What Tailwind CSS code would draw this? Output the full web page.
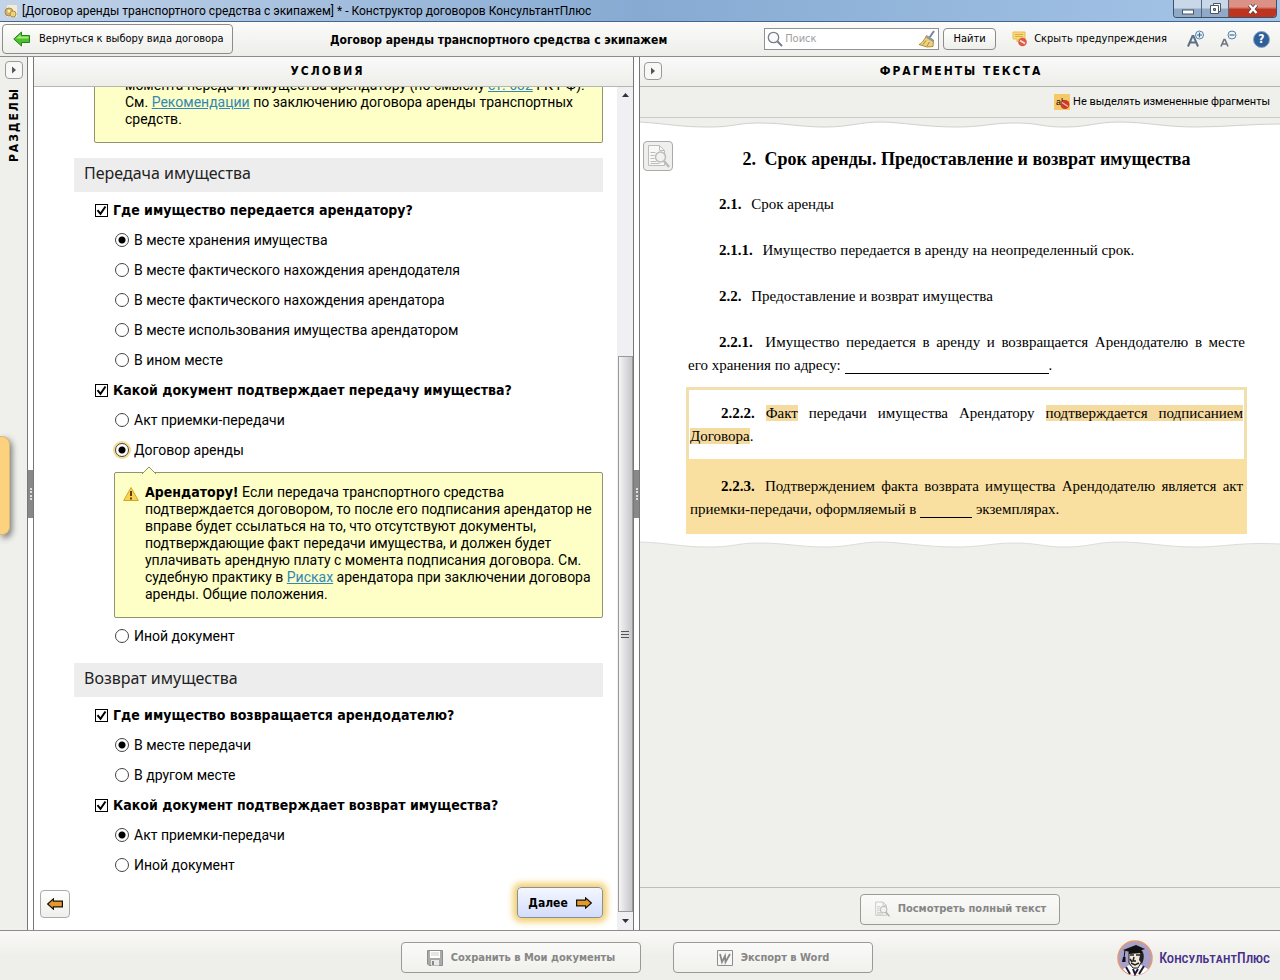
<!DOCTYPE html>
<html lang="ru">
<head>
<meta charset="utf-8">
<title>Конструктор договоров КонсультантПлюс</title>
<script src="https://cdn.jsdelivr.net/npm/@tailwindcss/browser@4"></script>
</head>
<body class="relative flex h-screen flex-col overflow-hidden bg-[#efefeb] font-[Roboto,'Noto_Sans',sans-serif] text-sm text-black">

<!-- Shared symbols -->
<svg class="hidden" aria-hidden="true">
  <symbol id="tick" viewBox="0 0 13 13"><path d="M2.5 6.2l3 3.6 5-7.3" fill="none" stroke="#000" stroke-width="2"/></symbol>
  <symbol id="arrow" viewBox="0 0 16 12"><path d="M.6 3.2h9V.9L15.3 6l-5.700 5.100V8.800h-9z" fill="#e39a2d" stroke="#1c1000" stroke-width="1.200"/></symbol>
  <symbol id="preview" viewBox="0 0 24 24">
    <path d="M2.500 1.500h11l5 5v15h-16z" fill="#f8f8f6" stroke="currentColor"/>
    <path d="M13.500 1.500v5h5M4.500 8.500h5M4.500 11.500h4M4.500 14.500h4M4.500 17.500h6M4.500 19.500h9" fill="none" stroke="currentColor"/>
    <circle cx="14.500" cy="13" r="5" fill="#f1f1ef" stroke="currentColor" stroke-width="1.500"/>
    <path d="M18 17l5 6" stroke="currentColor" stroke-width="2.500"/>
  </symbol>
</svg>

<!-- Title bar -->
<header class="flex h-[22px] shrink-0 items-center border-b border-[#47658c] bg-linear-to-r from-[#c3d4e9] via-[#86aad2] to-[#a6c6e8] pl-1 text-xs">
  <svg class="mr-1 size-[14px]" viewBox="0 0 14 14"><path d="M3 1h10v12H3z" fill="#f4ecd0"/><circle cx="5" cy="8" r="4" fill="#d9b45c" stroke="#a4855a"/><circle cx="9" cy="10" r="3" fill="#eed27a" stroke="#b08e3d"/><circle cx="5" cy="7" r="1.500" fill="#f7eec9"/></svg>
  <h1 class="mr-auto">[Договор аренды транспортного средства с экипажем] * - Конструктор договоров КонсультантПлюс</h1>
  <div class="mr-[3px] flex h-[18px] self-start overflow-hidden rounded-b border border-t-0 border-[#3f4f66]">
    <button type="button" aria-label="Свернуть" class="grid w-7 place-items-center border-r border-[#53647c] bg-linear-to-b from-[#c9d8e8] from-45% to-[#8fa9c6] to-55%"><svg class="size-[14px]" viewBox="0 0 14 14"><rect x="1.500" y="8" width="11" height="4" fill="#fff" stroke="#4b5564"/></svg></button>
    <button type="button" aria-label="Восстановить" class="grid w-[27px] place-items-center border-r border-[#53647c] bg-linear-to-b from-[#c9d8e8] from-45% to-[#8fa9c6] to-55%"><svg class="size-[13px]" viewBox="0 0 13 13"><path d="M4.500 1.500h7v8h-7z" fill="#fff" stroke="#4b5564"/><path d="M1.500 3.500h8v8h-8z" fill="#fff" stroke="#4b5564"/><path d="M4.500 6.500h2v2h-2z" fill="#8fa9c6" stroke="#4b5564"/></svg></button>
    <button type="button" aria-label="Закрыть" class="grid w-[47px] place-items-center bg-linear-to-b from-[#dc9186] from-40% to-[#bd3520] to-55%"><svg class="size-[12px]" viewBox="0 0 12 12"><path d="M2.500 2l7 8M9.500 2l-7 8" stroke="#5b3a3a" stroke-width="4"/><path d="M2.500 2l7 8M9.500 2l-7 8" stroke="#fff" stroke-width="2.500"/></svg></button>
  </div>
</header>

<!-- Toolbar -->
<div class="flex h-[35px] shrink-0 items-center border-b border-[#8c8c8c] bg-linear-to-b from-[#fbfbf9] to-[#ededea] pr-2.5 font-['DejaVu_Sans_Condensed','Noto_Sans',sans-serif] text-[11px]">
  <button type="button" class="ml-0.5 flex h-[30px] w-[231px] items-center gap-2 rounded border border-[#8c8c8c] bg-linear-to-b from-[#fdfdfc] to-[#eeeeeb] pl-2.5">
    <svg class="h-4 w-[18px]" viewBox="0 0 18 16"><path d="M.800 8L8.500 1v3.500H16.500v7H8.500V15z" fill="#4fc02b" stroke="#23811a"/><path d="M3 7.500L7.500 3.500v2h8v2z" fill="#a4e87e"/></svg>
    Вернуться к выбору вида договора
  </button>
  <h2 class="flex-1 pt-0.5 text-center text-xs font-bold">Договор аренды транспортного средства с экипажем</h2>
  <div class="flex h-[22px] w-[175px] items-center border border-[#8f9296] bg-white px-0.5">
    <svg class="size-4" viewBox="0 0 16 16"><circle cx="6.500" cy="6.500" r="5.200" fill="#fafafa" stroke="#777d8c" stroke-width="1.300"/><path d="M10.500 10.500l4.500 4.500" stroke="#777d8c" stroke-width="2"/></svg>
    <input type="search" aria-label="Поиск" placeholder="Поиск" class="min-w-0 flex-1 bg-transparent pl-0.5 outline-none placeholder:text-[#a0a0a0]">
    <button type="button" aria-label="Очистить"><svg class="size-[18px]" viewBox="0 0 18 18"><path d="M16 1l-4.500 6.500" stroke="#6f85ab" stroke-width="2"/><path d="M8.500 5.500l7 4.500-.5 6.500-6 .500L1 14.500C4 13.500 6.500 9.500 8.500 5.500z" fill="#eed27b" stroke="#ad8b40"/><path d="M8.500 7l6.500 4" stroke="#7f97bb" stroke-width="1.500"/><path d="M5 14.500l3-4M9 16l2.500-4" stroke="#b08a3a"/></svg></button>
  </div>
  <button type="button" class="ml-1 h-[22px] w-[53px] rounded-sm border border-[#8c8c8c] bg-linear-to-b from-white to-[#eeeeeb]">Найти</button>
  <button type="button" class="ml-4 flex items-center gap-1.5">
    <svg class="size-4" viewBox="0 0 16 16"><path d="M1 1h12v7H7l-2 3V8H1z" fill="#f8d978" stroke="#e8bf59"/><path d="M3 3.500h8M3 5.500h8" stroke="#dfac49"/><circle cx="10.500" cy="11" r="4.300" fill="#dd5a45"/><path d="M8 9.500l5 3" stroke="#fbe3dd" stroke-width="1.600"/></svg>
    Скрыть предупреждения
  </button>
  <button type="button" aria-label="Увеличить шрифт" class="ml-5"><svg class="size-[18px]" viewBox="0 0 18 18"><path d="M1 16.500L5.500 6h1L11 16.500M3 12.500h6" fill="none" stroke="#5d6e86" stroke-width="2"/><circle cx="12.500" cy="5" r="4" fill="#eef4fa" stroke="#5680a8"/><path d="M10 5h5M12.500 2.500v5" stroke="#386d9c" stroke-width="1.200"/></svg></button>
  <button type="button" aria-label="Уменьшить шрифт" class="ml-3.5"><svg class="size-[18px]" viewBox="0 0 18 18"><path d="M2 16.500L5 9.500h1L9 16.500M3.500 14h4" fill="none" stroke="#6c7480" stroke-width="1.600"/><circle cx="13" cy="5" r="4" fill="#eef4fa" stroke="#5680a8"/><path d="M10.500 5h5" stroke="#386d9c" stroke-width="1.200"/></svg></button>
  <button type="button" aria-label="Справка" class="ml-4 grid size-[17px] place-items-center rounded-full border border-[#8fa5bf] bg-[#2f5f9b] text-xs leading-3 font-bold text-white">?</button>
</div>

<main class="flex min-h-0 flex-1 border-b border-[#8c8c8c]">
  <!-- Collapsed sections rail -->
  <aside class="flex w-7 shrink-0 flex-col items-center border-r border-[#777] pt-1">
    <button type="button" aria-label="Показать разделы" class="grid size-[18px] shrink-0 place-items-center rounded border border-[#999] bg-[#f8f8f6]"><svg class="h-2 w-1.5" viewBox="0 0 6 8"><path d="M1 .5L5 4 1 7.500z" fill="#555"/></svg></button>
    <h2 class="mt-2 rotate-180 font-['DejaVu_Sans_Condensed',sans-serif] text-xs font-bold tracking-[2px] [writing-mode:vertical-rl]">РАЗДЕЛЫ</h2>
  </aside>
  <div class="flex w-[5px] shrink-0 items-center bg-white"><div class="grid h-12 w-full place-items-center bg-[#888]"><span class="h-3 border-l-2 border-dotted border-[#ddd]"></span></div></div>

  <!-- Conditions -->
  <section class="flex w-[601px] shrink-0 flex-col border-x border-[#777] bg-white">
    <h2 class="flex h-[30px] shrink-0 items-center justify-center border-b border-[#b5b5b2] bg-linear-to-b from-[#fafaf8] to-[#ededea] pr-3 pb-0.5 font-['DejaVu_Sans_Condensed',sans-serif] text-xs font-bold tracking-[2px]">УСЛОВИЯ</h2>
    <div class="flex min-h-0 flex-1">
      <div class="flex min-w-0 flex-1 flex-col overflow-hidden pr-3.5 pl-10">
        <div class="-mt-[35px] ml-5 shrink-0 rounded-xs border border-[#93936d] bg-[#feffc6] pt-6 pr-2 pb-3.5 pl-[30px] leading-[17px]">
          <p>момента передачи имущества арендатору (по смыслу <a href="#" class="text-[#3187b5] underline">ст. 632</a> ГК РФ).<br>См. <a href="#" class="text-[#3187b5] underline">Рекомендации</a> по заключению договора аренды транспортных<br>средств.</p>
        </div>

        <h3 class="mt-[15px] flex h-[34px] shrink-0 items-center bg-[#ededed] px-2.5 pb-1 font-['Noto_Sans',sans-serif] text-base text-[#222]">Передача имущества</h3>
        <div class="mt-[3px] flex flex-col pl-[21px]">
          <label class="flex h-[30px] items-center gap-[5px] font-['DejaVu_Sans_Condensed',sans-serif] font-bold"><span class="grid"><input type="checkbox" checked class="col-start-1 row-start-1 size-[13px] appearance-none border border-black bg-white"><svg class="col-start-1 row-start-1 size-[13px]"><use href="#tick"/></svg></span>Где имущество передается арендатору?</label>
          <div class="flex flex-col pl-5">
            <label class="flex h-[30px] items-center gap-[5px]"><input type="radio" name="place" checked class="size-3.5 appearance-none rounded-full border border-[#444] bg-white checked:bg-[radial-gradient(circle,#000_3px,#fff_4px)]">В месте хранения имущества</label>
            <label class="flex h-[30px] items-center gap-[5px]"><input type="radio" name="place" class="size-3.5 appearance-none rounded-full border border-[#444] bg-white checked:bg-[radial-gradient(circle,#000_3px,#fff_4px)]">В месте фактического нахождения арендодателя</label>
            <label class="flex h-[30px] items-center gap-[5px]"><input type="radio" name="place" class="size-3.5 appearance-none rounded-full border border-[#444] bg-white checked:bg-[radial-gradient(circle,#000_3px,#fff_4px)]">В месте фактического нахождения арендатора</label>
            <label class="flex h-[30px] items-center gap-[5px]"><input type="radio" name="place" class="size-3.5 appearance-none rounded-full border border-[#444] bg-white checked:bg-[radial-gradient(circle,#000_3px,#fff_4px)]">В месте использования имущества арендатором</label>
            <label class="flex h-[30px] items-center gap-[5px]"><input type="radio" name="place" class="size-3.5 appearance-none rounded-full border border-[#444] bg-white checked:bg-[radial-gradient(circle,#000_3px,#fff_4px)]">В ином месте</label>
          </div>
          <label class="flex h-[30px] items-center gap-[5px] font-['DejaVu_Sans_Condensed',sans-serif] font-bold"><span class="grid"><input type="checkbox" checked class="col-start-1 row-start-1 size-[13px] appearance-none border border-black bg-white"><svg class="col-start-1 row-start-1 size-[13px]"><use href="#tick"/></svg></span>Какой документ подтверждает передачу имущества?</label>
          <div class="flex flex-col pl-5">
            <label class="flex h-[30px] items-center gap-[5px]"><input type="radio" name="doc" class="size-3.5 appearance-none rounded-full border border-[#444] bg-white checked:bg-[radial-gradient(circle,#000_3px,#fff_4px)]">Акт приемки-передачи</label>
            <label class="flex h-[30px] items-center gap-[5px]"><input type="radio" name="doc" checked class="size-3.5 appearance-none rounded-full border border-[#444] bg-white ring-2 ring-[#f3dc93] checked:bg-[radial-gradient(circle,#000_3px,#fff_4px)]">Договор аренды</label>
            <div class="relative my-[7px] mb-[3px] -ml-px flex rounded-xs border border-[#93936d] bg-[#feffc6] pt-[11px] pr-2 pb-3.5 pl-2 leading-[17px]">
              <svg class="absolute -top-[7px] left-[26px] h-[8px] w-4" viewBox="0 0 16 8"><path d="M1 8l7-7 7 7" fill="#feffc6" stroke="#93936d"/></svg>
              <svg class="mt-0.5 mr-1.5 size-4 shrink-0" viewBox="0 0 16 16"><path d="M8 1.500L15.300 14.500H.700z" fill="#fbd44f" stroke="#d8a32c" stroke-linejoin="round"/><path d="M8 5v5M8 11.500v2" stroke="#4a3508" stroke-width="1.800"/></svg>
              <p><b class="font-['DejaVu_Sans_Condensed',sans-serif]">Арендатору!</b> Если передача транспортного средства<br>подтверждается договором, то после его подписания арендатор не<br>вправе будет ссылаться на то, что отсутствуют документы,<br>подтверждающие факт передачи имущества, и должен будет<br>уплачивать арендную плату с момента подписания договора. См.<br>судебную практику в <a href="#" class="text-[#3187b5] underline">Рисках</a> арендатора при заключении договора<br>аренды. Общие положения.</p>
            </div>
            <label class="flex h-[30px] items-center gap-[5px]"><input type="radio" name="doc" class="size-3.5 appearance-none rounded-full border border-[#444] bg-white checked:bg-[radial-gradient(circle,#000_3px,#fff_4px)]">Иной документ</label>
          </div>
        </div>

        <h3 class="mt-3 flex h-[34px] shrink-0 items-center bg-[#ededed] px-2.5 pb-1 font-['Noto_Sans',sans-serif] text-base text-[#222]">Возврат имущества</h3>
        <div class="mt-[3px] flex flex-col pl-[21px]">
          <label class="flex h-[30px] items-center gap-[5px] font-['DejaVu_Sans_Condensed',sans-serif] font-bold"><span class="grid"><input type="checkbox" checked class="col-start-1 row-start-1 size-[13px] appearance-none border border-black bg-white"><svg class="col-start-1 row-start-1 size-[13px]"><use href="#tick"/></svg></span>Где имущество возвращается арендодателю?</label>
          <div class="flex flex-col pl-5">
            <label class="flex h-[30px] items-center gap-[5px]"><input type="radio" name="rplace" checked class="size-3.5 appearance-none rounded-full border border-[#444] bg-white checked:bg-[radial-gradient(circle,#000_3px,#fff_4px)]">В месте передачи</label>
            <label class="flex h-[30px] items-center gap-[5px]"><input type="radio" name="rplace" class="size-3.5 appearance-none rounded-full border border-[#444] bg-white checked:bg-[radial-gradient(circle,#000_3px,#fff_4px)]">В другом месте</label>
          </div>
          <label class="flex h-[30px] items-center gap-[5px] font-['DejaVu_Sans_Condensed',sans-serif] font-bold"><span class="grid"><input type="checkbox" checked class="col-start-1 row-start-1 size-[13px] appearance-none border border-black bg-white"><svg class="col-start-1 row-start-1 size-[13px]"><use href="#tick"/></svg></span>Какой документ подтверждает возврат имущества?</label>
          <div class="flex flex-col pl-5">
            <label class="flex h-[30px] items-center gap-[5px]"><input type="radio" name="rdoc" checked class="size-3.5 appearance-none rounded-full border border-[#444] bg-white checked:bg-[radial-gradient(circle,#000_3px,#fff_4px)]">Акт приемки-передачи</label>
            <label class="flex h-[30px] items-center gap-[5px]"><input type="radio" name="rdoc" class="size-3.5 appearance-none rounded-full border border-[#444] bg-white checked:bg-[radial-gradient(circle,#000_3px,#fff_4px)]">Иной документ</label>
          </div>
        </div>

        <div class="mt-[7px] -ml-[34px] flex shrink-0 items-end justify-between">
          <button type="button" aria-label="Назад" class="grid h-7 w-[30px] place-items-center rounded-sm border border-[#aaa] bg-linear-to-b from-white to-[#eeeeeb]"><svg class="h-3 w-4 rotate-180"><use href="#arrow"/></svg></button>
          <button type="button" class="flex h-[31px] w-[86px] items-center justify-center gap-2 rounded-sm border border-[#8b8f9c] bg-linear-to-b from-[#f4f7ff] to-[#d3ddfa] font-['DejaVu_Sans_Condensed',sans-serif] text-xs font-bold shadow-[0_0_6px_4px_#f3cf6e]">Далее<svg class="h-3 w-4"><use href="#arrow"/></svg></button>
        </div>
      </div>
      <!-- Scroll bar -->
      <div class="flex w-4 shrink-0 flex-col items-center bg-[#f0f0f2]" aria-hidden="true">
        <svg class="mt-1.5 h-1 w-[7px] shrink-0" viewBox="0 0 7 4"><path d="M0 4L3.500 0 7 4z" fill="#333"/></svg>
        <div class="min-h-0 flex-[260]"></div>
        <div class="grid min-h-0 w-[15px] flex-[556] place-items-center border border-[#9a9a9e] bg-linear-to-r from-[#f5f5f5] to-[#c6c6cb]"><span class="h-[7px] w-2 border-y border-[#555] bg-[linear-gradient(#ddd_2px,#555_2px,#555_3px,#ddd_3px)]"></span></div>
        <svg class="my-[7px] h-1 w-[7px] shrink-0" viewBox="0 0 7 4"><path d="M0 0L3.500 4 7 0z" fill="#333"/></svg>
      </div>
    </div>
  </section>
  <div class="flex w-[5px] shrink-0 items-center bg-white"><div class="grid h-12 w-full place-items-center bg-[#888]"><span class="h-3 border-l-2 border-dotted border-[#ddd]"></span></div></div>

  <!-- Text fragments -->
  <section class="flex min-w-0 flex-1 flex-col border-l border-[#777]">
    <div class="flex h-[30px] shrink-0 items-center border-b border-[#b5b5b2] bg-linear-to-b from-[#fafaf8] to-[#ededea] px-1 pb-0.5">
      <button type="button" aria-label="Развернуть" class="grid size-[18px] shrink-0 place-items-center rounded border border-[#999] bg-[#f8f8f6]"><svg class="h-2 w-1.5" viewBox="0 0 6 8"><path d="M1 .5L5 4 1 7.500z" fill="#555"/></svg></button>
      <h2 class="flex-1 pr-4 text-center font-['DejaVu_Sans_Condensed',sans-serif] text-xs font-bold tracking-[2px]">ФРАГМЕНТЫ ТЕКСТА</h2>
    </div>
    <div class="flex h-[31px] shrink-0 items-center justify-end border-b border-[#c9c9c6] pr-2.5">
      <button type="button" class="flex items-center gap-[3px] text-[11px]">
        <svg class="size-4" viewBox="0 0 16 16"><path d="M0 0h16v16H0z" fill="#f6c869"/><text x="2" y="11" font-size="9" font-family="Liberation Sans">ab</text><circle cx="11" cy="10.500" r="4.500" fill="#c83c25"/><path d="M8 8.500l6 4" stroke="#f8b3a2" stroke-width="1.500"/></svg>
        Не выделять измененные фрагменты
      </button>
    </div>
    <svg class="h-2.5 w-full shrink-0" viewBox="0 0 640 10" preserveAspectRatio="none"><path d="M0 4C30 6 40 9 68 9S95 5 120 5S160 9 185 9S220 4 240 4S285 9 315 9S350 5 375 5S400 9 425 9S455 4 480 4S525 9 555 9S610 6 640 6V10H0z" fill="#fff"/><path d="M0 4C30 6 40 9 68 9S95 5 120 5S160 9 185 9S220 4 240 4S285 9 315 9S350 5 375 5S400 9 425 9S455 4 480 4S525 9 555 9S610 6 640 6" fill="none" stroke="#d0d0ce"/></svg>
    <div class="flex shrink-0 items-start bg-white pt-[13px] pr-[33px] pl-[3px]">
      <button type="button" aria-label="Показать в тексте" class="grid size-[30px] shrink-0 place-items-center rounded-sm border border-[#aaa] bg-[#efefed] text-[#bcbcbc]"><svg class="size-6"><use href="#preview"/></svg></button>
      <article class="ml-[13px] flex-1 font-['Liberation_Serif',serif] text-[15px] leading-[23px]">
        <h3 class="pt-1.5 text-center text-lg leading-6 font-bold"><span class="mr-1">2.</span> Срок аренды. Предоставление и возврат имущества</h3>
        <div class="flex flex-col gap-[23px] px-0.5 pt-[22px] text-justify indent-[31px]">
          <p><b class="mr-1.5">2.1.</b> Срок аренды</p>
          <p><b class="mr-1.5">2.1.1.</b> Имущество передается в аренду на неопределенный срок.</p>
          <p><b class="mr-1.5">2.2.</b> Предоставление и возврат имущества</p>
          <p><b class="mr-1.5">2.2.1.</b> Имущество передается в аренду и возвращается Арендодателю в месте его&nbsp;хранения по адресу: <span class="inline-block h-4 w-[204px] border-b border-black align-[-4px] indent-0"></span>.</p>
        </div>
        <div class="mt-2.5 border-[3px] border-b-0 border-[#f1dfae] bg-white px-px pt-3 pb-[11px] text-justify indent-[31px]">
          <p><b>2.2.2.</b> <mark class="bg-[#f6dba0]">Факт</mark> передачи имущества Арендатору <mark class="bg-[#f6dba0]">подтверждается подписанием Договора</mark>.</p>
        </div>
        <div class="bg-[#fae0a0] px-1 pt-4 pb-[13px] text-justify indent-[31px]">
          <p><b class="mr-1">2.2.3.</b> Подтверждением факта возврата имущества Арендодателю является акт приемки-передачи, оформляемый в <span class="inline-block h-4 w-[52px] border-b border-black align-[-4px] indent-0"></span> экземплярах.</p>
        </div>
      </article>
    </div>
    <svg class="h-[15px] w-full shrink-0" viewBox="0 0 640 15" preserveAspectRatio="none"><path d="M0 8C30 9 40 13 68 13S95 9 120 9S160 13 185 13S220 8 240 8S285 13 315 13S350 9 375 9S400 13 425 13S455 8 480 8S525 13 555 13S600 8 640 10V0H0z" fill="#fff"/><path d="M0 8C30 9 40 13 68 13S95 9 120 9S160 13 185 13S220 8 240 8S285 13 315 13S350 9 375 9S400 13 425 13S455 8 480 8S525 13 555 13S600 8 640 10" fill="none" stroke="#dddcd9"/></svg>
    <div class="mt-auto flex h-[43px] shrink-0 items-center justify-center border-t border-[#bdbdba]">
      <button type="button" disabled class="flex h-[31px] w-[200px] items-center justify-center gap-2 rounded-sm border border-[#999] bg-linear-to-b from-[#fafaf8] to-[#f0f0ed] font-['DejaVu_Sans_Condensed',sans-serif] text-[11px] font-bold text-[#868686]"><svg class="size-4 text-[#b5b5b5]"><use href="#preview"/></svg>Посмотреть полный текст</button>
    </div>
  </section>
</main>

<!-- Footer -->
<footer class="grid h-[49px] shrink-0 grid-cols-[1fr_auto_1fr] items-center bg-linear-to-b from-[#faf9f7] to-[#eeeeea] to-50% pt-1 pr-1.5 font-['DejaVu_Sans_Condensed',sans-serif] text-[11px] font-bold text-[#868686]">
  <div></div>
  <div class="flex gap-8">
    <button type="button" disabled class="flex h-[31px] w-60 items-center justify-center gap-2 rounded-sm border border-[#999] bg-linear-to-b from-[#fafaf8] to-[#f0f0ed]"><svg class="size-4" viewBox="0 0 16 16"><path d="M.5.5h15v15H2l-1.500-1.500z" fill="#aaa" stroke="#8e8e8e"/><path d="M3 1h10v7H3z" fill="#fff"/><path d="M4 3h8M4 5h8" stroke="#ccc"/><path d="M4 10h8v5.500H4z" fill="#e9e9e9"/><path d="M5 11h2v4H5z" fill="#888"/></svg>Сохранить в Мои документы</button>
    <button type="button" disabled class="flex h-[31px] w-[200px] items-center justify-center gap-2 rounded-sm border border-[#999] bg-linear-to-b from-[#fafaf8] to-[#f0f0ed]"><svg class="size-4" viewBox="0 0 16 16"><path d="M.5.5h15v15H.5z" fill="#f7f7f7" stroke="#8e8e8e"/><path d="M3 4l2 8 3-6 .5 6L13 4" fill="none" stroke="#888" stroke-width="1.800"/></svg>Экспорт в Word</button>
  </div>
  <div class="mr-1 flex items-center justify-end gap-1.5 text-[#46308a]">
    <svg class="size-9" viewBox="0 0 36 36">
      <circle cx="18" cy="18" r="17" fill="#a7a0cb" stroke="#e59a6c" stroke-width="1.500"/>
      <path d="M6 29l6-4 6 4 6-4 7 4c-3 4-8 6-13 6S9 33 6 29z" fill="#fff"/>
      <path d="M9 27l4 7M27 26l-5 8M16 29l2 5 3-5" stroke="#1d1838" stroke-width="2" fill="none"/>
      <path d="M12 12h12l1 9-4 7h-5l-4-5z" fill="#f1eadc" stroke="#222"/>
      <path d="M24 10c4 3 3 9 1 14l-3-4z" fill="#222"/>
      <path d="M13 15h4M19 15h4M17 17l-1 4h3M14 23l4 2 4-2M13 19l2 3" stroke="#222" stroke-width="1.500" fill="none"/>
      <path d="M6 10l13-5 9 4-12 4zM12 12l12-3 1 4-13 1z" fill="#111"/>
      <path d="M8 10l-1 8" stroke="#111"/><path d="M6 17h2.500v5H5z" fill="#111"/>
    </svg>
    <span class="font-['Roboto_Condensed',Roboto,sans-serif] text-sm font-medium [font-variant:small-caps]">КонсультантПлюс</span>
  </div>
</footer>

<!-- Edge tab -->
<div class="absolute top-[436px] left-0 h-[99px] w-2.5 rounded-r-lg border border-l-0 border-[#d8b878] bg-[#fdd27f] shadow-[2px_3px_6px_#777]"></div>
</body>
</html>
